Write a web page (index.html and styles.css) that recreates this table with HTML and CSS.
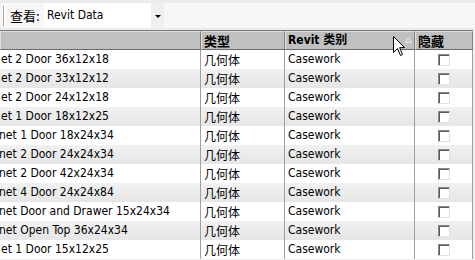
FILE: index.html
```html
<!DOCTYPE html>
<html>
<head>
<meta charset="utf-8">
<link rel="stylesheet" href="styles.css">
</head>
<body>
<div class="toolbar">
  <div class="band">
    <span class="sep"></span>
    <span class="label">查看:</span>
    <div class="combo">
      <span class="combo-text">Revit Data</span>
      <span class="combo-btn"><span class="tri"></span></span>
    </div>
  </div>
</div>
<div class="table">
  <div class="row head">
    <div class="c c1"></div>
    <div class="c c2">类型</div>
    <div class="c c3">Revit 类别<span class="sort">
      <svg width="7" height="6" viewBox="0 0 7 6"><path d="M3.5 0.5 L6.5 5.5 L0.5 5.5 Z" fill="none" stroke="#e8e8e8" stroke-width="1"/></svg></span></div>
    <div class="c c4">隐藏</div>
  </div>
  <div class="row"><div class="c c1"><span class="nm">et 2 Door 36x12x18</span></div><div class="c c2">几何体</div><div class="c c3">Casework</div><div class="c c4"><span class="cb"></span></div></div>
  <div class="row alt"><div class="c c1"><span class="nm">et 2 Door 33x12x12</span></div><div class="c c2">几何体</div><div class="c c3">Casework</div><div class="c c4"><span class="cb"></span></div></div>
  <div class="row"><div class="c c1"><span class="nm">et 2 Door 24x12x18</span></div><div class="c c2">几何体</div><div class="c c3">Casework</div><div class="c c4"><span class="cb"></span></div></div>
  <div class="row alt"><div class="c c1"><span class="nm">et 1 Door 18x12x25</span></div><div class="c c2">几何体</div><div class="c c3">Casework</div><div class="c c4"><span class="cb"></span></div></div>
  <div class="row"><div class="c c1"><span class="nm sh">net 1 Door 18x24x34</span></div><div class="c c2">几何体</div><div class="c c3">Casework</div><div class="c c4"><span class="cb"></span></div></div>
  <div class="row alt"><div class="c c1"><span class="nm sh">net 2 Door 24x24x34</span></div><div class="c c2">几何体</div><div class="c c3">Casework</div><div class="c c4"><span class="cb"></span></div></div>
  <div class="row"><div class="c c1"><span class="nm sh">net 2 Door 42x24x34</span></div><div class="c c2">几何体</div><div class="c c3">Casework</div><div class="c c4"><span class="cb"></span></div></div>
  <div class="row alt"><div class="c c1"><span class="nm sh">net 4 Door 24x24x84</span></div><div class="c c2">几何体</div><div class="c c3">Casework</div><div class="c c4"><span class="cb"></span></div></div>
  <div class="row"><div class="c c1"><span class="nm sh">net Door and Drawer 15x24x34</span></div><div class="c c2">几何体</div><div class="c c3">Casework</div><div class="c c4"><span class="cb"></span></div></div>
  <div class="row alt"><div class="c c1"><span class="nm sh">net Open Top 36x24x34</span></div><div class="c c2">几何体</div><div class="c c3">Casework</div><div class="c c4"><span class="cb"></span></div></div>
  <div class="row"><div class="c c1"><span class="nm">et 1 Door 15x12x25</span></div><div class="c c2">几何体</div><div class="c c3">Casework</div><div class="c c4"><span class="cb"></span></div></div>
</div>
<svg class="cursor" width="13" height="21" viewBox="0 0 13 21">
  <path d="M0.5 0.5 L0.5 16.5 L4.5 12.5 L7.5 19.5 L9.5 18.5 L6.7 11.7 L11.5 11.5 Z" fill="#fff" stroke="#000" stroke-width="1" stroke-linejoin="miter"/>
</svg>
</body>
</html>
```
FILE: styles.css
```css
html, body {
  margin: 0;
  padding: 0;
}
body {
  width: 475px;
  height: 260px;
  overflow: hidden;
  background: #f0f0f0;
  font-family: "DejaVu Sans Condensed", "DejaVu Sans", "Noto Sans CJK SC", sans-serif;
  font-stretch: condensed;
  font-size: 12px;
  color: #000;
  position: relative;
}
.toolbar {
  height: 30px;
  padding-top: 3px;
  box-sizing: border-box;
  background: #ececec;
}
.band {
  height: 25px;
  display: flex;
  align-items: center;
  background: #f7f7f7;
}
.sep {
  width: 1px;
  height: 20px;
  margin-left: 3px;
  background: #a8a8a8;
  box-shadow: 1px 0 0 #fff;
}
.label {
  margin-left: 6px;
  font-family: "Noto Sans CJK SC", sans-serif;
  font-size: 13px;
  width: 34px;
}
.combo {
  display: flex;
  height: 25px;
  width: 120px;
  background: #fff;
}
.combo-text {
  flex: 1;
  padding-left: 3px;
  line-height: 25px;
  font-size: 12px;
}
.combo-btn {
  width: 13px;
  background: #efefef;
  display: flex;
  align-items: center;
  justify-content: center;
}
.tri {
  width: 0;
  height: 0;
  border-left: 3px solid transparent;
  border-right: 3px solid transparent;
  border-top: 3px solid #000;
  margin-left: 1px;
  margin-top: 1px;
}
.table {
  width: 473px;
  border-top: 1px solid #7a7a7a;
  background: #fff;
}
.row {
  display: grid;
  grid-template-columns: 201px 84px 130px 58px;
  height: 19px;
  background: #fff;
}
.row.alt {
  background: linear-gradient(#f1f1f1, #e6e6e6);
}
.c {
  border-right: 1px solid #a0a0a0;
  overflow: hidden;
  white-space: nowrap;
  line-height: 19px;
  display: flex;
  align-items: center;
}
.c2 {
  padding-left: 3px;
  font-family: "Noto Sans CJK SC", sans-serif;
  font-size: 12px;
}
.c3 {
  padding-left: 3px;
  position: relative;
}
.c4 {
  justify-content: center;
}
.nm {
  margin-left: 1px;
}
.nm.sh {
  margin-left: -1px;
}
.cb {
  width: 12px;
  height: 12px;
  box-sizing: border-box;
  background: #fff;
  border: 1px solid;
  border-color: #8a8a8a #e0e0e0 #e0e0e0 #8a8a8a;
  box-shadow: inset 1px 1px 0 #5a5a5a;
  margin-left: 1px;
}
.head {
  background: #c0c0c0;
  height: 19px;
}
.head .c {
  box-sizing: border-box;
  border-top: 1px solid #dedede;
  border-left: 1px solid #dedede;
  border-right: 1px solid #808080;
  border-bottom: 1px solid #6a6a6a;
  font-weight: bold;
  font-size: 12px;
  line-height: 17px;
  font-family: "DejaVu Sans Condensed", "DejaVu Sans", "Noto Sans CJK SC", sans-serif;
}
.head .c2, .head .c4 {
  font-family: "Noto Sans CJK SC", sans-serif;
  font-size: 13px;
  padding-left: 2px;
  justify-content: flex-start;
}
.head .c3 {
  padding-left: 2px;
}
.sort {
  position: absolute;
  right: 2px;
  top: 5px;
  line-height: 0;
}
.cursor {
  position: absolute;
  left: 393px;
  top: 36px;
}
```
